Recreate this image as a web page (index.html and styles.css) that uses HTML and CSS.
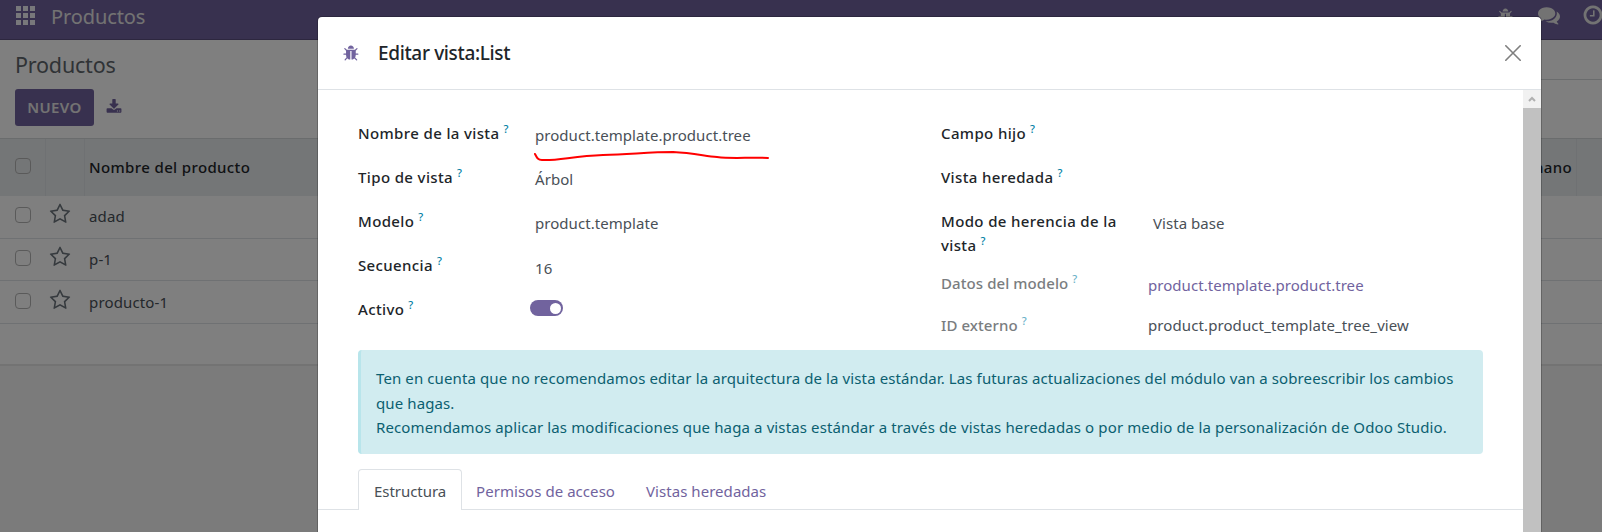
FILE: index.html
```html
<!DOCTYPE html>
<html lang="es">
<head>
<meta charset="utf-8">
<title>Productos</title>
<link rel="stylesheet" href="styles.css">
</head>
<body>
<svg class="defs" width="0" height="0" aria-hidden="true">
  <symbol id="bug" viewBox="0 0 1792 1792"><path d="M1632 960q0 26-19 45t-45 19h-224q0 171-67 290l208 209q19 19 19 45t-19 45q-18 19-45 19t-45-19l-198-197q-5 5-15 13t-42 28.5-65 36.5-82 29-97 13v-896h-128v896q-51 0-101.5-13.5t-87-33-66-39-43.5-32.5l-15-14-183 207q-20 21-48 21-24 0-43-16-19-18-20.5-44.5t15.5-46.5l202-227q-58-114-58-274h-224q-26 0-45-19t-19-45 19-45 45-19h224v-294l-173-173q-19-19-19-45t19-45 45-19 45 19l173 173h844l173-173q19-19 45-19t45 19 19 45-19 45l-173 173v294h224q26 0 45 19t19 45zm-480-576h-640q0-133 93.500-226.500t226.500-93.500 226.500 93.500 93.500 226.500z"/></symbol>
  <symbol id="download" viewBox="0 0 1792 1792"><path d="M1344 1344q0-26-19-45t-45-19-45 19-19 45 19 45 45 19 45-19 19-45zm256 0q0-26-19-45t-45-19-45 19-19 45 19 45 45 19 45-19 19-45zm128-224v320q0 40-28 68t-68 28h-1472q-40 0-68-28t-28-68v-320q0-40 28-68t68-28h465l135 136q58 56 136 56t136-56l136-136h464q40 0 68 28t28 68zm-325-569q17 41-14 70l-448 448q-18 19-45 19t-45-19l-448-448q-31-29-14-70 17-39 59-39h256v-448q0-26 19-45t45-19h256q26 0 45 19t19 45v448h256q42 0 59 39z"/></symbol>
  <symbol id="comments" viewBox="0 0 1792 1792"><path d="M1408 768q0 139-94 257t-256.500 186.500-353.500 68.500q-86 0-176-16-124 88-278 128-36 9-86 16h-3q-11 0-20.500-8t-11.500-21q-1-3-1-6.500t.5-6.500 2-6l2.500-5 3.500-5.500 4-5 4.500-5 4-4.500q5-6 23-25t26-29.500 22.500-29 25-38.500 20.500-44q-124-72-195-177t-71-224q0-139 94-257t256.500-186.500 353.500-68.500 353.500 68.500 256.500 186.500 94 257zm384 256q0 120-71 224.500t-195 176.500q10 24 20.500 44t25 38.500 22.500 29 26 29.500 23 25q1 1 4 4.500t4.500 5 4 5 3.500 5.500l2.500 5 2 6 .5 6.500-1 6.500q-3 14-13 22t-22 7q-50-7-86-16-154-40-278-128-90 16-176 16-271 0-472-132 58 4 88 4 161 0 309-45t264-129q125-92 192-212t67-254q0-77-23-152 129 71 204 178t75 230z"/></symbol>
  <symbol id="clock" viewBox="0 0 1792 1792"><path d="M1024 544v448q0 14-9 23t-23 9h-320q-14 0-23-9t-9-23v-64q0-14 9-23t23-9h224v-352q0-14 9-23t23-9h64q14 0 23 9t9 23zm416 352q0-148-73-273t-198-198-273-73-273 73-198 198-73 273 73 273 198 198 273 73 273-73 198-198 73-273zm224 0q0 209-103 385.500t-279.500 279.500-385.500 103-385.500-103-279.500-279.500-103-385.500 103-385.500 279.500-279.500 385.500-103 385.500 103 279.500 279.500 103 385.500z"/></symbol>
  <symbol id="star" viewBox="0 0 1792 1792"><path d="M1201 1004l306-297-422-62-189-382-189 382-422 62 306 297-73 421 378-199 377 199zm527-357q0 22-26 48l-363 354 86 500q1 7 1 20 0 50-41 50-19 0-40-12l-449-236-449 236q-22 12-40 12-21 0-31.500-14.500t-10.500-35.500q0-6 2-20l86-500-364-354q-25-27-25-48 0-37 56-46l502-73 225-455q19-41 49-41t49 41l225 455 502 73q56 9 56 46z"/></symbol>
</svg>

<div class="app">
  <nav class="navbar">
    <span class="apps"><i></i><i></i><i></i><i></i><i></i><i></i><i></i><i></i><i></i></span>
    <span class="brand">Productos</span>
    <span class="systray">
      <svg class="tray-bug"><use href="#bug"/></svg>
      <svg class="tray-chat"><use href="#comments"/></svg>
      <svg class="tray-clock"><use href="#clock"/></svg>
    </span>
  </nav>
  <header class="panel">
    <div class="panel-main">
      <h1 class="crumb">Productos</h1>
      <div class="actions">
        <button class="btn-new">NUEVO</button>
        <svg class="export"><use href="#download"/></svg>
      </div>
    </div>
    <div class="panel-side"></div>
  </header>
  <div class="list">
    <div class="row head"><div class="c-check"><span class="check"></span></div><div class="c-star"></div><div class="c-name">Nombre del producto</div><div class="c-hand">A mano</div><div class="c-end"></div></div>
    <div class="row r1"><div class="c-check"><span class="check"></span></div><div class="c-star"><svg class="star"><use href="#star"/></svg></div><div class="c-name">adad</div></div>
    <div class="row r2"><div class="c-check"><span class="check"></span></div><div class="c-star"><svg class="star"><use href="#star"/></svg></div><div class="c-name">p-1</div></div>
    <div class="row r3"><div class="c-check"><span class="check"></span></div><div class="c-star"><svg class="star"><use href="#star"/></svg></div><div class="c-name">producto-1</div></div>
    <div class="row r4"></div>
  </div>
</div>

<div class="backdrop">
  <section class="modal">
    <header class="modal-head">
      <svg class="modal-bug"><use href="#bug"/></svg>
      <h2 class="modal-title">Editar vista:List</h2>
      <svg class="close" viewBox="0 0 16 16"><path d="M.8.8l14.400 14.400M15.200.8L.8 15.200"/></svg>
    </header>
    <div class="modal-body">
      <div class="sheet">
        <div class="groups">
          <div class="group left">
            <div class="field"><label>Nombre de la vista<sup>?</sup></label><span class="value marked">product.template.product.tree<svg class="stroke" viewBox="0 0 240 14"><path d="M2 2C4 6 5 8 9 8C25 9 40 4 70 3C100 2 118 0 140 0C160 1 172 4 184 5C200 7 216 5 235 6"/></svg></span></div>
            <div class="field"><label>Tipo de vista<sup>?</sup></label><span class="value">Árbol</span></div>
            <div class="field"><label>Modelo<sup>?</sup></label><span class="value">product.template</span></div>
            <div class="field"><label>Secuencia<sup>?</sup></label><span class="value num">16</span></div>
            <div class="field"><label>Activo<sup>?</sup></label><span class="switch"></span></div>
          </div>
          <div class="group right">
            <div class="field"><label>Campo hijo<sup>?</sup></label></div>
            <div class="field"><label>Vista heredada<sup>?</sup></label></div>
            <div class="field tall"><label>Modo de herencia de la<br>vista<sup>?</sup></label><span class="value">Vista base</span></div>
            <div class="field model"><label class="muted">Datos del modelo<sup>?</sup></label><span class="value flush link">product.template.product.tree</span></div>
            <div class="field"><label class="muted">ID externo<sup>?</sup></label><span class="value flush xid">product.product_template_tree_view</span></div>
          </div>
        </div>
        <div class="alert">
          <p>Ten en cuenta que no recomendamos editar la arquitectura de la vista estándar. Las futuras actualizaciones del módulo van a sobreescribir los cambios</p>
          <p>que hagas.</p>
          <p class="l3">Recomendamos aplicar las modificaciones que haga a vistas estándar a través de vistas heredadas o por medio de la personalización de Odoo Studio.</p>
        </div>
        <div class="tabs">
          <span class="tab active">Estructura</span>
          <span class="tab t2">Permisos de acceso</span>
          <span class="tab t3">Vistas heredadas</span>
        </div>
      </div>
      <div class="scrollbar"><span class="arrow"><svg viewBox="0 0 8 6"><path d="M1 5l3-3 3 3"/></svg></span></div>
    </div>
  </section>
</div>
</body>
</html>
```
FILE: styles.css
```css
* { box-sizing: border-box; margin: 0; }
body { width: 1602px; height: 532px; overflow: hidden; font: 15px/24px "Noto Sans", "Open Sans", sans-serif; color: #495057; background: #fff; }
svg { fill: currentColor; flex: none; }
.defs { position: absolute; }

.app { height: 532px; display: flex; flex-direction: column; background: #f7f7f7; }
.navbar { height: 40px; display: flex; align-items: flex-start; background: #71639e; border-bottom: 1px solid #5a4f7f; color: #fff; padding-left: 16px; }
.apps { display: grid; grid-template-columns: repeat(3, 5px); grid-auto-rows: 5px; gap: 2px; margin-top: 6px; width: 19px; }
.apps i { background: #fff; opacity: .9; }
.brand { font-size: 20px; line-height: 34px; margin-left: 16px; color: #e6e6e6; letter-spacing: -.1px; }
.systray { margin-left: auto; display: flex; color: #e6e6e6; }
.tray-bug { width: 16px; height: 16px; margin: 8px 24px 0 0; }
.tray-chat { width: 22px; height: 22px; margin: 4px 22px 0 0; }
.tray-clock { width: 22px; height: 22px; margin: 4px -2px 0 0; }

.panel { height: 98px; display: flex; background: #fff; }
.panel-main { flex: 1; padding: 13px 0 0 15px; }
.panel-side { width: 202px; height: 40px; border-bottom: 1px solid #d5d8db; }
.crumb { font-size: 21.500px; line-height: 24px; font-weight: 400; color: #5f666c; letter-spacing: -.2px; }
.actions { display: flex; align-items: center; margin-top: 12px; }
.btn-new { width: 79px; height: 37px; border: 0; border-radius: 3px; background: #71639e; color: #e6e6e6; font: 600 15px/37px "Noto Sans", sans-serif; padding: 0; letter-spacing: .4px; }
.export { width: 16px; height: 16px; margin: -2px 0 0 12px; color: #71639e; }

.row { display: flex; background: #fff; border-bottom: 1px solid #dee2e6; }
.head { height: 58px; background: #e9ecef; border-top: 1px solid #d5d8db; border-bottom: 0; color: #212529; font-weight: 500; letter-spacing: .37px; }
.r1 { height: 43px; }
.r2 { height: 42px; }
.r3 { height: 43px; padding-top: 1px; }
.r4 { height: 42px; border-bottom: 2px solid #e6e6e6; }
.c-check { width: 46px; padding: 11px 0 0 15px; }
.c-star { width: 39px; padding: 7px 0 0 3px; }
.c-name { flex: 1; padding: 8px 0 0 4px; letter-spacing: .15px; }
.head > .c-name { letter-spacing: .37px; }
.c-hand { width: 120px; text-align: right; padding-right: 4px; }
.c-end { width: 25px; }
.head > div { border-right: 1px solid #dee2e6; padding-top: 16px; }
.head > .c-check { padding-top: 19px; }
.head > .c-name, .head > .c-end { border-right: 0; }
.check { display: block; width: 16px; height: 16px; border: 1px solid #b4b4b4; border-radius: 4px; }
.star { display: block; width: 22px; height: 22px; color: #6c757d; }

.backdrop { position: absolute; inset: 0; background: rgba(0, 0, 0, .5); padding: 17px 61px 0 318px; overflow: hidden; height: 532px; width: 1602px; }
.modal { height: 600px; width: 1223px; background: #fff; border-radius: 4px 4px 0 0; box-shadow: 0 0 0 1px rgba(0, 0, 0, .2); overflow: hidden; }
.modal-head { height: 73px; display: flex; align-items: center; border-bottom: 1px solid #dee2e6; padding: 0 20px 0 25px; }
.modal-bug { width: 17px; height: 17px; color: #71639e; }
.modal-title { font-size: 19px; line-height: 30px; font-weight: 500; color: #212529; margin-left: 18px; letter-spacing: -.35px; }
.close { width: 16px; height: 16px; margin-left: auto; fill: none; stroke: #7f7f7f; stroke-width: 1.600; stroke-linecap: round; }
.modal-body { display: flex; }
.sheet { width: 1205px; padding-top: 31px; }
.groups { display: grid; grid-template-columns: 583px 542px; margin-left: 40px; height: 229px; }
.field { display: flex; height: 44px; }
.tall { height: 62px; }
.model { height: 42px; }
.field label { font-weight: 500; color: #212529; width: 177px; white-space: nowrap; letter-spacing: .37px; }
.right label { width: 212px; }
.field label.muted { color: #7a7d80; letter-spacing: .08px; }
sup { font-size: 11px; line-height: 0; font-weight: 500; color: #0180a5; vertical-align: 6px; margin-left: 4px; }
.muted sup { opacity: .6; }
.value { padding-top: 2px; white-space: nowrap; letter-spacing: .05px; }
.num { padding-top: 3px; }
.flush { margin-left: -5px; }
.xid { padding-top: 0; letter-spacing: .1px; }
.link { color: #71639e; }
.marked { position: relative; }
.stroke { position: absolute; left: -2px; top: 31px; width: 240px; height: 14px; fill: none; stroke: #f00; stroke-width: 2; stroke-linecap: round; overflow: visible; }
.switch { width: 33px; height: 16px; margin: 3px 0 0 -5px; border-radius: 8px; background: #71639e; display: flex; justify-content: flex-end; padding: 2.500px; }
.switch::after { content: ""; width: 11px; height: 11px; border-radius: 50%; background: #fff; }
.alert { margin: 0 40px; height: 104px; background: #d1ecf0; border-left: 3px solid #b8e5eb; border-radius: 4px; color: #0b6070; padding: 16px 0 0 15px; line-height: 24.500px; white-space: nowrap; letter-spacing: .107px; }
.l3 { letter-spacing: .124px; }
.tabs { display: flex; height: 41px; margin-top: 15px; padding-left: 40px; box-shadow: inset 0 -1px #dee2e6; }
.tab { padding: 10px 0 0 14px; color: #71639e; line-height: 24px; white-space: nowrap; letter-spacing: .05px; }
.tab.active { width: 104px; padding: 9px 0 0 15px; border: 1px solid #dee2e6; border-bottom: 0; border-radius: 4px 4px 0 0; background: #fff; color: #495057; letter-spacing: -.05px; }
.t2 { width: 170px; }
.scrollbar { width: 18px; background: #c1c1c1; height: 520px; }
.arrow { display: flex; align-items: center; justify-content: center; height: 18px; background: #f1f1f1; }
.arrow svg { width: 8px; height: 6px; fill: none; stroke: #b0b0b0; stroke-width: 2; }
```
